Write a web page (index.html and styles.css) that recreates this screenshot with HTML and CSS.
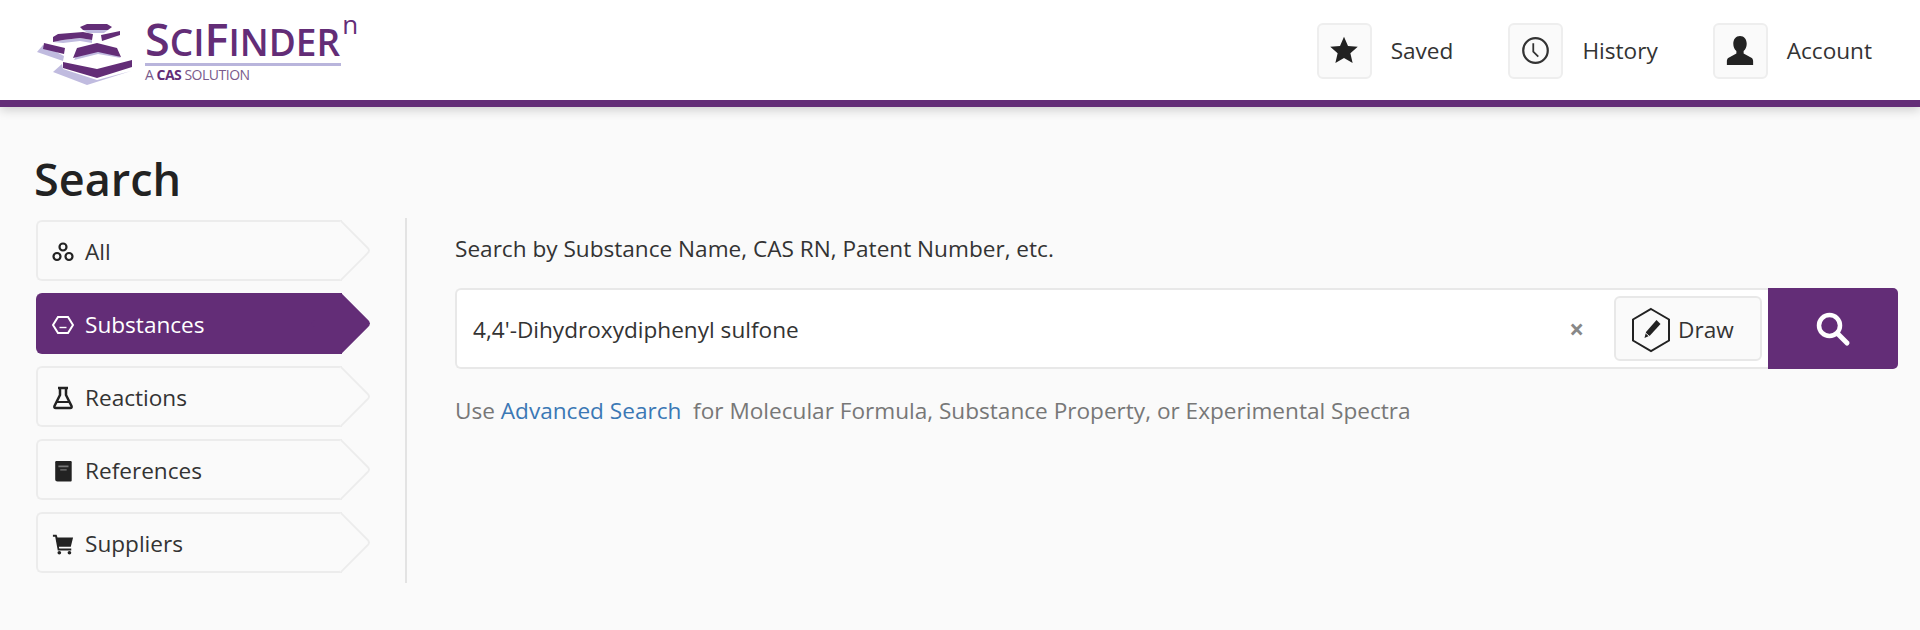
FILE: index.html
```html
<!DOCTYPE html>
<html lang="en">
<head>
  <meta charset="UTF-8" />
  <title>SciFinder - Search</title>
  <link rel="stylesheet" href="styles.css">
</head>
<body>
  <header class="topbar">
    <a class="logo">
      <svg class="logo-mark" viewBox="30 18 105 70" width="105" height="70">
        <!-- lavender shadows -->
        <g fill="#c0bbdf">
          <polygon points="43,45 37,52 63,61 64,56" />
          <polygon points="62,64 53,72 87,85 131,71 97,80 63,69" />
          <polygon points="53,42 63,40 80,38 92,40 92,43 80,41 63,43" />
          <polygon points="77,55 97,50 117,55 121,58 98,54 74,60" />
          <polygon points="83,30 108,30 104,33 88,33" />
        </g>
        <!-- purple cells -->
        <g fill="#632d77">
          <polygon points="80,27 87,24 107,24 112,27 108,30 83,30" />
          <polygon points="53,37 58,34 83,32 93,34 92,40 80,38 63,40 53,42" />
          <polygon points="101,35 120,31 120,35 102,41" />
          <polygon points="44,43 65,48 64,54 43,49" />
          <polygon points="77,48 97,43 117,48 121,57 98,52 73,58" />
          <polygon points="63,62 97,69 132,60 132,67 97,78 63,68" />
        </g>
      </svg>
      <div class="logo-text">
        <div class="logo-name">S<small>CI</small>F<small>INDER</small><sup>n</sup></div>
        <div class="logo-sub">A <b>CAS</b> SOLUTION</div>
      </div>
    </a>
    <nav class="topnav">
      <a class="topnav-item">
        <span class="icon-box">
          <svg viewBox="0 0 24 23" width="30" height="29"><path fill="#222" d="M12 .5l3.200 7.300 7.800.7-5.900 5.200 1.800 7.800-6.900-4.100-6.900 4.100 1.800-7.800L1 8.500l7.800-.7z" /></svg>
        </span>
        Saved
      </a>
      <a class="topnav-item">
        <span class="icon-box">
          <svg viewBox="0 0 26 26" width="29" height="29" fill="none" stroke="#333" stroke-width="2"><circle cx="13" cy="13" r="11" /><path d="M11 6.500v7.500l4.500 4.500" stroke-width="1.600" /></svg>
        </span>
        History
      </a>
      <a class="topnav-item">
        <span class="icon-box">
          <svg viewBox="0 0 26 30" width="28" height="31"><path fill="#222" d="M13 1c-4 0-6.500 3.200-6.500 7.500 0 3 1.200 5.500 3 7v2.500L2 22c-1.200.7-1.700 1.800-1.700 3.500V29h25.400v-3.500c0-1.700-.5-2.800-1.700-3.500l-7.500-4v-2.500c1.800-1.500 3-4 3-7C19.500 4.200 17 1 13 1z" /></svg>
        </span>
        Account
      </a>
    </nav>
  </header>

  <main class="page">
    <h1>Search</h1>
    <div class="columns">
      <ul class="side-menu">
        <li class="side-item">
          <svg viewBox="0 0 22 20" width="22" height="20" fill="none" stroke="#222" stroke-width="2.200"><circle cx="11" cy="5" r="3.500" /><circle cx="5" cy="14.500" r="3.500" /><circle cx="17" cy="14.500" r="3.500" /></svg>
          All
        </li>
        <li class="side-item active">
          <svg viewBox="0 0 22 20" width="22" height="20" fill="none" stroke="#fff" stroke-width="2"><polygon points="6,2 16,2 21,10 16,18 6,18 1,10" /><path d="M7.500 12.500h7" stroke-width="1.400" /></svg>
          Substances
        </li>
        <li class="side-item">
          <svg viewBox="0 0 22 24" width="22" height="24" fill="none" stroke="#222" stroke-width="2.500"><path d="M6 2h10M8 2v7L2.500 20c-.5 1.200.1 2 1.200 2h14.600c1.100 0 1.700-.8 1.200-2L14 9V2" /><path stroke-width="2" d="M5 16h12" /></svg>
          Reactions
        </li>
        <li class="side-item">
          <svg viewBox="0 0 22 24" width="22" height="22"><path fill="#222" d="M4 1h15c1 0 1.500.5 1.500 1.500V22c0 1-.5 1.500-1.500 1.500H5c-1.500 0-2.500-1-2.500-2.500V2.500C2.500 1.500 3 1 4 1z" /><path fill="#777" d="M6 6h11v2H6zM8 10h7v1.500H8z" /></svg>
          References
        </li>
        <li class="side-item">
          <svg viewBox="0 0 24 24" width="22" height="22"><path fill="#222" d="M1 2h4l1 3h17l-2.500 10H7.500l.4 2H21v2H6.300L3.500 4H1z" /><circle fill="#222" cx="8" cy="21.500" r="2" /><circle fill="#222" cx="19" cy="21.500" r="2" /></svg>
          Suppliers
        </li>
      </ul>

      <section class="search-panel">
        <p class="search-label">Search by Substance Name, CAS RN, Patent Number, etc.</p>
        <div class="search-row">
          <div class="search-input">
            <span class="search-value">4,4'-Dihydroxydiphenyl sulfone</span>
            <span class="clear-btn">&times;</span>
            <span class="draw-btn">
              <svg viewBox="0 0 42 46" width="42" height="46">
                <polygon points="21,2 39,12.500 39,33.500 21,44 3,33.500 3,12.500" fill="none" stroke="#222" stroke-width="2" />
                <path fill="#222" d="M26.500 13l4 4-10.500 11.500-5.500 2.500 1.500-6z" />
                <path stroke="#fafafa" stroke-width="1" d="M14.500 25l5 4.500" />
              </svg>
              Draw
            </span>
          </div>
          <button class="search-btn">
            <svg viewBox="0 0 36 36" width="36" height="36" fill="none" stroke="#fff"><circle cx="14.500" cy="14.500" r="10.500" stroke-width="4.500" /><path d="M22.500 22.500L32 32" stroke-width="5" stroke-linecap="round" /></svg>
          </button>
        </div>
        <p class="search-hint">Use <a class="hint-link">Advanced Search</a> &nbsp;for Molecular Formula, Substance Property, or Experimental Spectra</p>
      </section>
    </div>
  </main>
</body>
</html>
```

FILE: styles.css
```css
/* GLOBAL */
body {
  font-family: 'Open Sans', Arial, sans-serif;
  margin: 0;
  background-color: #fafafa;
  color: #333;
  font-size: 22.6px;
}

/* TOP BAR */
.topbar {
  display: flex;
  justify-content: space-between;
  align-items: center;
  box-sizing: border-box;
  height: 107px;
  padding: 1px 48px 0 30px;
  background-color: #fff;
  border-bottom: 7px solid #632d77;
  box-shadow: 0 3px 10px rgba(0, 0, 0, 0.18);
}

.logo {
  display: flex;
  align-items: flex-start;
  gap: 10px;
  height: 70px;
  margin-top: 5px;
}

.logo-text {
  color: #632d77;
}

.logo-name {
  width: 196px;
  height: 48px;
  box-sizing: border-box;
  border-bottom: 3px solid #b9b5dc;
  font-weight: 600;
  font-size: 45px;
  line-height: 41px;
  white-space: nowrap;
}

.logo-name small {
  font-size: 37px;
}

.logo-name sup {
  font-size: 26px;
  font-weight: 400;
  line-height: 0;
  vertical-align: 22px;
  margin-left: 2px;
}

.logo-sub {
  font-size: 14px;
  line-height: 18px;
  letter-spacing: -0.5px;
  color: #7a5a8c;
}

.logo-sub b {
  color: #632d77;
}

.topnav {
  display: flex;
  gap: 55px;
}

.topnav-item {
  display: flex;
  align-items: center;
  gap: 19px;
  color: #333;
}

.icon-box {
  display: flex;
  align-items: center;
  justify-content: center;
  width: 55px;
  height: 56px;
  box-sizing: border-box;
  background-color: #fafafa;
  border: 2px solid #eee;
  border-radius: 6px;
}

/* PAGE */
.page {
  padding: 42px 22px 0 34px;
}

h1 {
  margin: 0 0 9px;
  font-size: 45px;
  line-height: 60px;
  font-weight: 600;
  color: #222;
}

.columns {
  display: flex;
}

/* SIDE MENU */
.side-menu {
  list-style: none;
  margin: 0;
  padding: 2px 36px 10px 2px;
  border-right: 2px solid #e3e3e3;
  display: flex;
  flex-direction: column;
  gap: 12px;
}

.side-item {
  position: relative;
  display: flex;
  align-items: center;
  gap: 11px;
  box-sizing: border-box;
  width: 306px;
  height: 61px;
  padding: 2px 0 0 14px;
  margin-right: 27px;
  border: 2px solid #ececec;
  border-right: none;
  border-radius: 6px 0 0 6px;
  background-color: #fafafa;
}

.side-item svg {
  flex: none;
  position: relative;
  z-index: 1;
}

/* arrow tip on the right of each tab */
.side-item::after {
  content: '';
  position: absolute;
  top: 7px;
  right: -21px;
  width: 43px;
  height: 43px;
  box-sizing: border-box;
  background-color: #fafafa;
  border-top: 2px solid #ececec;
  border-right: 2px solid #ececec;
  border-radius: 0 5px 0 0;
  transform: rotate(45deg);
}

.side-item.active {
  color: #fff;
  background-color: #632d77;
  border-color: #632d77;
}

.side-item.active::after {
  background-color: #632d77;
  border-color: #632d77;
}

/* SEARCH PANEL */
.search-panel {
  flex: 1;
  padding-left: 48px;
}

.search-label {
  margin: 16px 0 24px;
  line-height: 30px;
}

.search-row {
  display: flex;
  height: 81px;
}

.search-input {
  flex: 1;
  display: flex;
  align-items: center;
  box-sizing: border-box;
  padding: 0 6px 0 16px;
  background-color: #fff;
  border: 2px solid #e8e8e8;
  border-right: none;
  border-radius: 6px 0 0 6px;
}

.search-value {
  flex: 1;
  padding-top: 2px;
}

.clear-btn {
  margin-right: 30px;
  font-size: 26px;
  font-weight: 700;
  color: #888;
}

.draw-btn {
  display: flex;
  align-items: center;
  gap: 6px;
  box-sizing: border-box;
  width: 148px;
  height: 65px;
  padding: 2px 0 0 14px;
  background-color: #fafafa;
  border: 2px solid #e8e8e8;
  border-radius: 6px;
}

.search-btn {
  display: flex;
  align-items: center;
  justify-content: center;
  width: 130px;
  border: none;
  border-radius: 0 5px 5px 0;
  background-color: #632d77;
}

.search-hint {
  margin: 27px 0 0;
  line-height: 30px;
  color: #777;
}

.hint-link {
  color: #3b78b5;
}
```
